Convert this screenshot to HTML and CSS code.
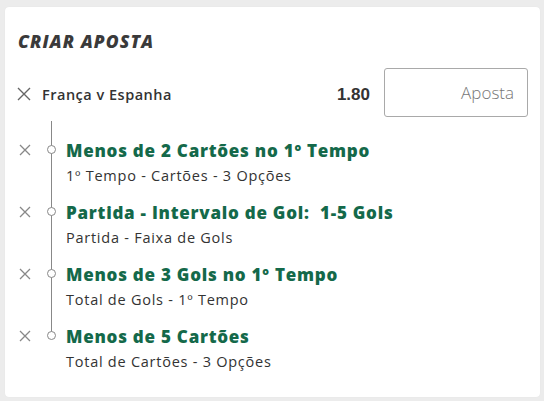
FILE: index.html
```html
<!DOCTYPE html>
<html lang="pt">
<head>
<meta charset="utf-8">
<link rel="stylesheet" href="styles.css">
</head>
<body>
<div class="card">
  <h1 class="title">CRIAR APOSTA</h1>
  <div class="match">
    <svg class="x x-lg" viewBox="0 0 14 14"><path d="M1 1L13 13M13 1L1 13"/></svg>
    <span class="match-name">França v Espanha</span>
    <span class="odds">1.80</span>
    <input class="stake" type="text" placeholder="Aposta">
  </div>
  <div class="legs">
    <div class="leg">
      <svg class="x" viewBox="0 0 12 12"><path d="M1 1L11 11M11 1L1 11"/></svg>
      <span class="node"></span>
      <div class="leg-text">
        <div class="leg-title">Menos de 2 Cartões no 1º Tempo</div>
        <div class="leg-sub">1º Tempo - Cartões - 3 Opções</div>
      </div>
    </div>
    <div class="leg">
      <svg class="x" viewBox="0 0 12 12"><path d="M1 1L11 11M11 1L1 11"/></svg>
      <span class="node"></span>
      <div class="leg-text">
        <div class="leg-title">Partida - Intervalo de Gol:&nbsp; 1-5 Gols</div>
        <div class="leg-sub">Partida - Faixa de Gols</div>
      </div>
    </div>
    <div class="leg">
      <svg class="x" viewBox="0 0 12 12"><path d="M1 1L11 11M11 1L1 11"/></svg>
      <span class="node"></span>
      <div class="leg-text">
        <div class="leg-title">Menos de 3 Gols no 1º Tempo</div>
        <div class="leg-sub">Total de Gols - 1º Tempo</div>
      </div>
    </div>
    <div class="leg">
      <svg class="x" viewBox="0 0 12 12"><path d="M1 1L11 11M11 1L1 11"/></svg>
      <span class="node"></span>
      <div class="leg-text">
        <div class="leg-title">Menos de 5 Cartões</div>
        <div class="leg-sub">Total de Cartões - 3 Opções</div>
      </div>
    </div>
  </div>
</div>
</body>
</html>
```
FILE: styles.css
```css
* { box-sizing: border-box; }
html, body { margin: 0; }
body {
  background: #ececec;
  padding: 7px 4px 4px 5px;
  font-family: "Open Sans", "Noto Sans", sans-serif;
  color: #333;
}
.card {
  background: #fff;
  border-radius: 4px;
  height: 390px;
  padding: 24px 12px 0 13px;
  box-shadow: 0 0 1px rgba(0,0,0,0.08);
}
.title {
  margin: 0;
  font-size: 17.5px;
  font-weight: 800;
  font-style: italic;
  line-height: 20px;
  color: #3a3a3a;
  letter-spacing: 1.1px;
}
.match {
  display: flex;
  align-items: center;
  margin-top: 17px;
}
.x {
  width: 12px;
  height: 12px;
  flex: none;
  stroke: #888;
  stroke-width: 1.3;
  fill: none;
}
.x-lg {
  width: 14px;
  height: 14px;
  stroke: #666;
  stroke-width: 1.4;
  margin-left: -1px;
  margin-top: 3px;
}
.match-name {
  margin-left: 11px;
  font-size: 14.5px;
  font-weight: 600;
  color: #333;
  margin-top: 4px;
  letter-spacing: 0.5px;
  flex: 1;
}
.odds {
  font-family: "Liberation Sans", Arial, sans-serif;
  font-weight: 700;
  font-size: 17px;
  color: #333;
  margin-right: 14px;
  margin-top: 4px;
}
.stake {
  width: 144px;
  height: 49px;
  border: 1px solid #a9a9a9;
  border-radius: 3px;
  padding: 0 13px 0 10px;
  text-align: right;
  font-family: "Open Sans", sans-serif;
  font-size: 17px;
  font-weight: 300;
  color: #333;
  background: #fff;
}
.stake::placeholder { color: #777; opacity: 1; }
.legs {
  position: relative;
  margin-top: 2px;
}
.legs::before {
  content: "";
  position: absolute;
  left: 33px;
  top: 2px;
  height: 212px;
  width: 1px;
  background: #888;
}
.leg {
  display: flex;
  align-items: flex-start;
  height: 62px;
  padding-top: 20px;
}
.leg .x {
  margin-left: 1px;
  margin-top: 5px;
}
.node {
  position: relative;
  flex: none;
  width: 9px;
  height: 9px;
  border: 1px solid #888;
  border-radius: 50%;
  background: #fff;
  margin-left: 16px;
  margin-top: 6px;
}
.leg-text {
  margin-left: 10px;
}
.leg-title {
  font-size: 17px;
  font-weight: 800;
  color: #14694a;
  line-height: 23px;
  letter-spacing: 0.75px;
}
.leg-sub {
  font-size: 14.5px;
  font-weight: 500;
  color: #333;
  line-height: 23px;
  margin-top: 2px;
  letter-spacing: 0.75px;
}
```
